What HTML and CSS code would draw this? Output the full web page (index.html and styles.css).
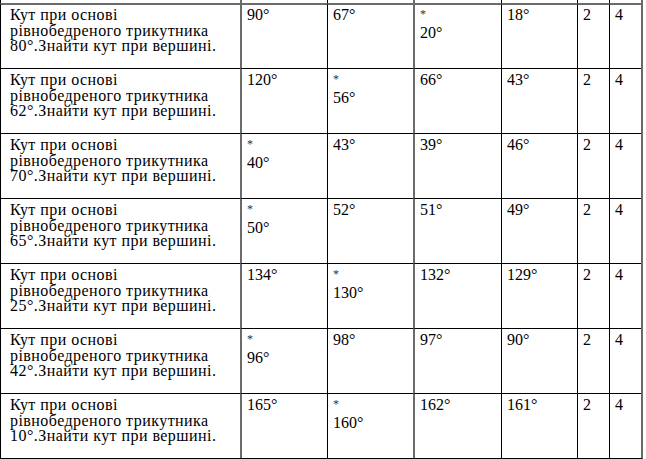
FILE: index.html
```html
<!DOCTYPE html>
<html lang="uk">
<head>
<meta charset="utf-8">
<title>Кут при основі рівнобедреного трикутника</title>
<link rel="stylesheet" href="styles.css">
</head>
<body>
<div class="sheet">
  <div class="grid">
    <div class="cell stub"></div><div class="cell stub c2"></div><div class="cell stub"></div><div class="cell stub c4"></div><div class="cell stub"></div><div class="cell stub"></div><div class="cell stub"></div>

    <div class="cell first q">Кут при основі<br>рівнобедреного трикутника<br>80°.Знайти кут при вершині.</div>
    <div class="cell first c2">90°</div>
    <div class="cell first">67°</div>
    <div class="cell first c4"><div class="star">*</div>20°</div>
    <div class="cell first">18°</div>
    <div class="cell first">2</div>
    <div class="cell first">4</div>

    <div class="cell q">Кут при основі<br>рівнобедреного трикутника<br>62°.Знайти кут при вершині.</div>
    <div class="cell c2">120°</div>
    <div class="cell"><div class="star">*</div>56°</div>
    <div class="cell c4">66°</div>
    <div class="cell">43°</div>
    <div class="cell">2</div>
    <div class="cell">4</div>

    <div class="cell q">Кут при основі<br>рівнобедреного трикутника<br>70°.Знайти кут при вершині.</div>
    <div class="cell c2"><div class="star">*</div>40°</div>
    <div class="cell">43°</div>
    <div class="cell c4">39°</div>
    <div class="cell">46°</div>
    <div class="cell">2</div>
    <div class="cell">4</div>

    <div class="cell q">Кут при основі<br>рівнобедреного трикутника<br>65°.Знайти кут при вершині.</div>
    <div class="cell c2"><div class="star">*</div>50°</div>
    <div class="cell">52°</div>
    <div class="cell c4">51°</div>
    <div class="cell">49°</div>
    <div class="cell">2</div>
    <div class="cell">4</div>

    <div class="cell q">Кут при основі<br>рівнобедреного трикутника<br>25°.Знайти кут при вершині.</div>
    <div class="cell c2">134°</div>
    <div class="cell"><div class="star">*</div>130°</div>
    <div class="cell c4">132°</div>
    <div class="cell">129°</div>
    <div class="cell">2</div>
    <div class="cell">4</div>

    <div class="cell q">Кут при основі<br>рівнобедреного трикутника<br>42°.Знайти кут при вершині.</div>
    <div class="cell c2"><div class="star">*</div>96°</div>
    <div class="cell">98°</div>
    <div class="cell c4">97°</div>
    <div class="cell">90°</div>
    <div class="cell">2</div>
    <div class="cell">4</div>

    <div class="cell q">Кут при основі<br>рівнобедреного трикутника<br>10°.Знайти кут при вершині.</div>
    <div class="cell c2">165°</div>
    <div class="cell"><div class="star">*</div>160°</div>
    <div class="cell c4">162°</div>
    <div class="cell">161°</div>
    <div class="cell">2</div>
    <div class="cell">4</div>
  </div>
</div>
</body>
</html>
```

FILE: styles.css
```css
html, body {
  margin: 0;
  padding: 0;
  background: #fff;
}

.sheet {
  width: 646px;
  height: 459px;
  overflow: hidden;
}

.grid {
  display: grid;
  grid-template-columns: 240px 87px 86px 88px 76px 32px 32px;
  grid-template-rows: 3px;
  grid-auto-rows: 65px;
  width: 641px;
  border-right: 2px solid #6b6b6b;
  border-bottom: 1px solid #000;
  font-family: "Liberation Serif", "Times New Roman", serif;
  font-size: 16px;
  line-height: 15.5px;
  color: #000;
}

.cell {
  box-sizing: border-box;
  border-top: 1px solid #000;
  border-left: 1px solid #000;
  padding: 3px 0 0 5px;
  white-space: nowrap;
}

.q {
  padding-left: 9px;
  letter-spacing: 0.45px;
}

.c2,
.c4 {
  border-left: 2px solid #6b6b6b;
}

.grid .stub {
  border-top: none;
  padding: 0;
}

.grid .first {
  border-top: 2px solid #6b6b6b;
  padding-top: 2px;
}

.star {
  font-size: 12px;
  line-height: 12px;
  height: 18px;
  padding-top: 1px;
  box-sizing: border-box;
  color: #333;
}
```
